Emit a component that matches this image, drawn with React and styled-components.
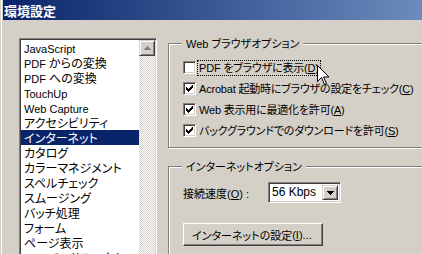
import React from 'react';
import styled, { createGlobalStyle } from 'styled-components';

const GlobalStyle = createGlobalStyle`
  body {
    margin: 0;
    background: #d4d0c8;
    font-family: "Noto Sans CJK JP", "Noto Sans", sans-serif;
    font-size: 12px;
    font-feature-settings: "palt";
  }
`;

const Win = styled.div`
  position: relative;
  width: 422px;
  height: 254px;
  overflow: hidden;
  box-sizing: border-box;
  padding-left: 3px;
  background: #d4d0c8;
  box-shadow: inset 1px 0 #d4d0c8, inset 2px 0 #fff;
`;

const TitleBar = styled.div`
  height: 20px;
  display: flex;
  align-items: center;
  padding-left: 1px;
  color: #fff;
  font-weight: bold;
  font-size: 13px;
  line-height: 15px;
  font-feature-settings: normal;
  background: linear-gradient(to right, #0a246a, #a6caf0) 0 0 / 670px 100% no-repeat;
`;

const Body = styled.div`
  display: flex;
  padding: 18px 0 0 16px;
`;

const Latin = styled.span`
  font-family: "Liberation Sans", Arial, sans-serif;
  font-size: 11px;
`;

const ListBox = styled.div`
  width: 138px;
  height: 240px;
  flex: none;
  box-sizing: border-box;
  display: flex;
  border: 1px solid;
  border-color: #808080 #fff #fff #808080;
  box-shadow: inset 1px 1px #404040, inset -1px -1px #d4d0c8;
  padding: 1px;
`;

const Items = styled.div`
  flex: 1;
  background: #fff;
  display: flex;
  flex-direction: column;
`;

const Item = styled.div`
  height: 15px;
  line-height: 15px;
  padding-left: 3px;
  white-space: nowrap;
  overflow: hidden;
  color: ${p => (p.$selected ? '#fff' : '#000')};
  background: ${p => (p.$selected ? '#0a246a' : 'transparent')};
`;

const ScrollBar = styled.div`
  width: 16px;
  display: flex;
  flex-direction: column;
`;

const ScrollButton = styled.div`
  height: 16px;
  box-sizing: border-box;
  background: #d4d0c8;
  border: 1px solid;
  border-color: #d4d0c8 #404040 #404040 #d4d0c8;
  box-shadow: inset 1px 1px #fff, inset -1px -1px #808080;
  display: flex;
  align-items: center;
  justify-content: center;
`;

const Track = styled.div`
  flex: 1;
  background: repeating-conic-gradient(#d4d0c8 0 25%, #fff 0 50%) 0 0 / 2px 2px;
`;

const Right = styled.div`
  margin-left: 11px;
  padding-top: 5px;
  display: flex;
  flex-direction: column;
  font-size: 11px;
`;

const Group = styled.div`
  position: relative;
  box-sizing: border-box;
  width: 300px;
  height: ${p => p.$height}px;
  margin-top: ${p => p.$gap || 0}px;
  border: 1px solid #808080;
  box-shadow: inset 1px 1px #fff, 1px 1px #fff;
  padding: ${p => p.$padTop}px 0 0 14px;
  display: flex;
  flex-direction: column;
`;

const Legend = styled.span`
  position: absolute;
  top: -8px;
  left: 13px;
  padding: 0 4px;
  line-height: 14px;
  background: #d4d0c8;
  white-space: nowrap;
`;

const CheckRow = styled.div`
  display: flex;
  align-items: center;
  height: 13px;
  margin-bottom: 8px;
`;

const Box = styled.span`
  width: 13px;
  height: 13px;
  box-sizing: border-box;
  flex: none;
  background: #fff;
  border: 1px solid;
  border-color: #808080 #fff #fff #808080;
  box-shadow: inset 1px 1px #404040, inset -1px -1px #d4d0c8;
  display: flex;
  align-items: center;
  justify-content: center;
`;

const CheckLabel = styled.span`
  margin-left: 1px;
  padding: 0 1px;
  line-height: 13px;
  white-space: nowrap;
  letter-spacing: -0.2px;
  border: 1px ${p => (p.$focus ? 'dotted #000' : 'solid transparent')};
`;

const U = styled.span`
  text-decoration: underline;
`;

const FieldRow = styled.div`
  display: flex;
  align-items: center;
`;

const FieldLabel = styled.span`
  width: 85px;
  white-space: nowrap;
`;

const Combo = styled.div`
  width: 73px;
  height: 21px;
  box-sizing: border-box;
  display: flex;
  background: #fff;
  border: 1px solid;
  border-color: #808080 #fff #fff #808080;
  box-shadow: inset 1px 1px #404040, inset -1px -1px #d4d0c8;
  padding: 2px;
`;

const ComboText = styled.span`
  flex: 1;
  line-height: 15px;
  padding-left: 1px;
  font-family: "Liberation Sans", Arial, sans-serif;
  font-size: 12px;
`;

const ComboButton = styled(ScrollButton)`
  width: 16px;
  height: 15px;
`;

const Button = styled.div`
  margin-top: 20px;
  width: 140px;
  height: 23px;
  box-sizing: border-box;
  display: flex;
  align-items: center;
  padding-left: 8px;
  white-space: nowrap;
  border: 1px solid;
  border-color: #fff #404040 #404040 #fff;
  box-shadow: inset -1px -1px #808080;
`;

const Cursor = styled.svg`
  position: absolute;
  left: 317px;
  top: 65px;
`;

// latin runs get a narrower font, like the bitmap ui font
const T = ({ s }) =>
  s.split(/([\x20-\x7e]+)/).map((part, i) =>
    i % 2 ? <Latin key={i}>{part}</Latin> : part
  );

const Mn = ({ k }) => (
  <Latin>(<U>{k}</U>)</Latin>
);

const items = [
  'JavaScript', 'PDF からの変換', 'PDF への変換', 'TouchUp', 'Web Capture',
  'アクセシビリティ', 'インターネット', 'カタログ', 'カラーマネジメント',
  'スペルチェック', 'スムージング', 'バッチ処理', 'フォーム', 'ページ表示', 'ユニバーサルアクセス',
];

const Check = () => (
  <svg width="7" height="7" viewBox="0 0 7 7">
    <path d="M6 0h1v3h-1v1h-1v1h-1v1h-1v1h-1v-1h-1v-1h-1v-3h1v1h1v1h1v-1h1v-1h1z" fill="#000" />
  </svg>
);

const checks = [
  { on: false, focus: true, text: 'PDF をブラウザに表示', key: 'D' },
  { on: true, text: 'Acrobat 起動時にブラウザの設定をチェック', key: 'C' },
  { on: true, text: 'Web 表示用に最適化を許可', key: 'A' },
  { on: true, text: 'バックグラウンドでのダウンロードを許可', key: 'S' },
];

export default function App() {
  return (
    <>
      <GlobalStyle />
      <Win>
        <TitleBar>環境設定</TitleBar>
        <Body>
          <ListBox>
            <Items>
              {items.map(t => (
                <Item key={t} $selected={t === 'インターネット'}><T s={t} /></Item>
              ))}
            </Items>
            <ScrollBar>
              <ScrollButton>
                <svg width="7" height="4"><path d="M3 0h1v1h1v1h1v1h1v1h-7v-1h1v-1h1v-1h1z" fill="#808080" /></svg>
              </ScrollButton>
              <Track />
            </ScrollBar>
          </ListBox>
          <Right>
            <Group $height={105} $padTop={17}>
              <Legend><T s="Web ブラウザオプション" /></Legend>
              {checks.map(c => (
                <CheckRow key={c.key}>
                  <Box>{c.on && <Check />}</Box>
                  <CheckLabel $focus={c.focus}>
                    <T s={c.text} /><Mn k={c.key} />
                  </CheckLabel>
                </CheckRow>
              ))}
            </Group>
            <Group $height={120} $gap={18} $padTop={15}>
              <Legend>インターネットオプション</Legend>
              <FieldRow>
                <FieldLabel>接続速度<Mn k="O" /><Latin> :</Latin></FieldLabel>
                <Combo>
                  <ComboText>56 Kbps</ComboText>
                  <ComboButton>
                    <svg width="7" height="4"><path d="M0 0h7v1h-1v1h-1v1h-1v1h-1v-1h-1v-1h-1v-1h-1z" fill="#000" /></svg>
                  </ComboButton>
                </Combo>
              </FieldRow>
              <Button>インターネットの設定<Mn k="I" /><Latin>...</Latin></Button>
            </Group>
          </Right>
        </Body>
        <Cursor width="12" height="20" viewBox="0 0 12 20">
          <path d="M0.5 0.5v16l4-4 3 7 2-1-3-6.5h5.5z" fill="#fff" stroke="#000" strokeWidth="1" />
        </Cursor>
      </Win>
    </>
  );
}
